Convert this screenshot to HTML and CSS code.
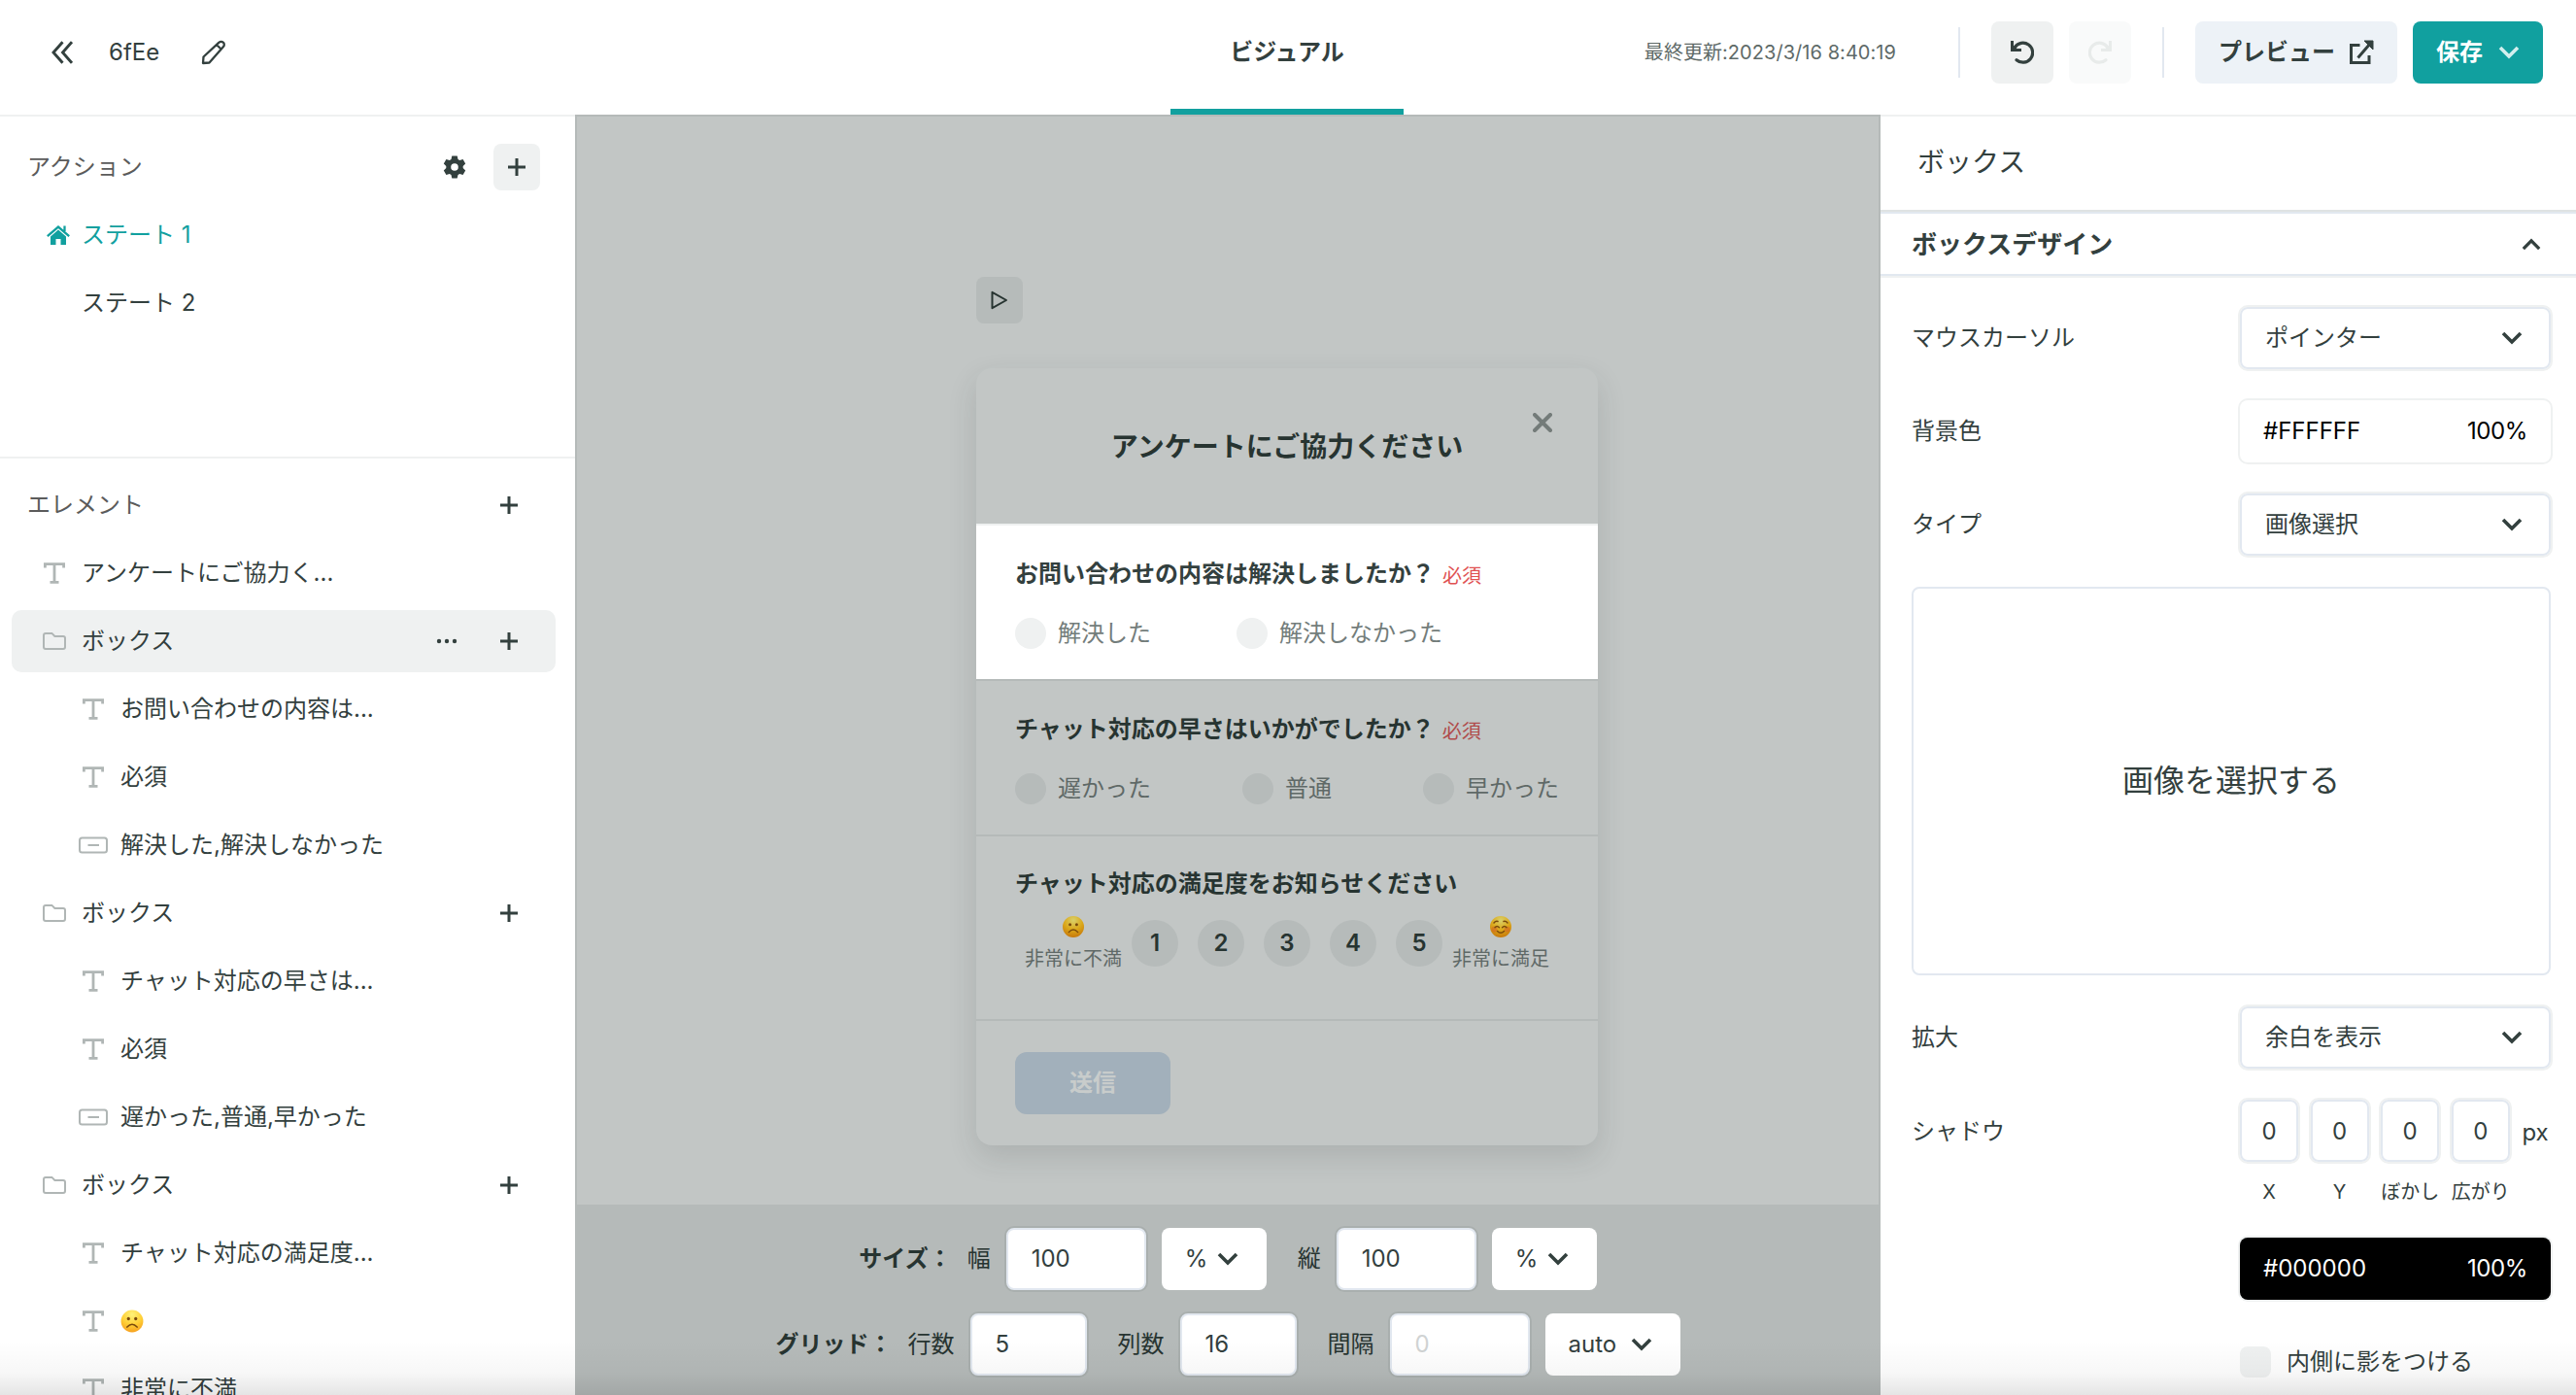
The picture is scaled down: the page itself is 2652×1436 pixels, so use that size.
FILE: index.html
```html
<!DOCTYPE html>
<html lang="ja">
<head>
    <meta charset="UTF-8">
    <meta name="viewport" content="width=device-width, initial-scale=1.0">
    <title>6fEe - ビジュアル</title>
    <link rel="stylesheet" href="styles.css">
</head>
<body>

    <!-- Shared icons -->
    <svg class="sprite" width="0" height="0">
        <symbol id="i-plus" viewBox="0 0 18 18"><path d="M9 0v18M0 9h18" stroke="currentColor" stroke-width="3"/></symbol>
        <symbol id="i-chevron" viewBox="0 0 22 14"><path d="M2 2l9 9 9-9" fill="none" stroke="currentColor" stroke-width="3.6"/></symbol>
        <symbol id="i-text" viewBox="0 0 22 22"><path d="M1.400 5.400V1.600h19.200v3.800M11 1.600v18.800M6.500 20.400h9" fill="none" stroke="currentColor" stroke-width="2.800"/></symbol>
        <symbol id="i-folder" viewBox="0 0 24 20"><path d="M3 1.9h6.4l3 3H21q2 0 2 2V16q0 2-2 2H3q-2 0-2-2V3.900q0-2 2-2z" fill="none" stroke="currentColor" stroke-width="2"/></symbol>
        <symbol id="i-field" viewBox="0 0 30 18"><rect x="1" y="1.500" width="28" height="15" rx="2.500" fill="none" stroke="currentColor" stroke-width="2"/><path d="M9.500 9h11.500" stroke="currentColor" stroke-width="2"/></symbol>
        <symbol id="i-redo" viewBox="0 0 24 24"><path d="M18 19.700a10 10 0 1 1 1.800-12.900" fill="none" stroke="currentColor" stroke-width="3.200" stroke-linecap="round"/><path d="M21 0h3v11H13V8h4.500L21 5z" fill="currentColor"/></symbol>
        <radialGradient id="face" cx=".5" cy=".2" r=".85">
            <stop offset="0" stop-color="#fff27a"/>
            <stop offset=".55" stop-color="#ffcf35"/>
            <stop offset="1" stop-color="#f59a1c"/>
        </radialGradient>
        <radialGradient id="face-dim" cx=".5" cy=".2" r=".85">
            <stop offset="0" stop-color="#d9d06a"/>
            <stop offset=".5" stop-color="#dba91b"/>
            <stop offset="1" stop-color="#c57208"/>
        </radialGradient>
        <symbol id="i-frown" viewBox="0 0 22 22">
            <circle cx="7.600" cy="8.700" r="1.500"/><circle cx="14.400" cy="8.700" r="1.500"/>
            <path d="M6.300 16.600q4.700-5.200 9.400 0" fill="none" stroke="currentColor" stroke-width="1.400" stroke-linecap="round"/>
        </symbol>
        <symbol id="i-smile" viewBox="0 0 22 22">
            <circle cx="4.500" cy="13.500" r="3" fill="#d4572a" opacity=".45"/><circle cx="17.500" cy="13.500" r="3" fill="#d4572a" opacity=".45"/>
            <path d="M4 7q1.800-2.200 4-1.500M18 7q-1.800-2.200-4-1.500M5 11.800q2.200-2.600 4.400 0M12.600 11.800q2.200-2.600 4.400 0M7.500 15.500q3.500 3.600 7 0" fill="none" stroke="currentColor" stroke-width="1.500" stroke-linecap="round"/>
        </symbol>
    </svg>

    <header class="header">
        <div class="header-left">
            <svg class="back" width="22" height="24" viewBox="0 0 22 24"><path d="M11.500 1.200L2 12l9.500 10.800M21 1.200L11.500 12l9.500 10.800" fill="none" stroke="currentColor" stroke-width="2.900"/></svg>
            <span class="name">6fEe</span>
            <svg width="26" height="26" viewBox="0 0 26 26"><path d="M2 24l.5-6.500L18.500 2.700a3 3 0 0 1 4.300 0 3 3 0 0 1 .2 4.300L8.500 23.500zM16 5l5 5" fill="none" stroke="currentColor" stroke-width="2.300" stroke-linejoin="round"/></svg>
        </div>
        <div class="tab">ビジュアル</div>
        <div class="header-right">
            <span class="updated">最終更新:2023/3/16 8:40:19</span>
            <span class="sep"></span>
            <button class="icon-btn undo"><svg class="flip" width="24" height="24"><use href="#i-redo"/></svg></button>
            <button class="icon-btn redo"><svg width="24" height="24"><use href="#i-redo"/></svg></button>
            <span class="sep"></span>
            <button class="btn preview">プレビュー
                <svg width="26" height="26" viewBox="0 0 26 26"><path d="M11.500 5.500H2.500v18h18.500V16M9.500 18.500L22 4" fill="none" stroke="currentColor" stroke-width="3"/><path d="M16 1h9v9z" fill="currentColor" stroke="currentColor"/></svg>
            </button>
            <button class="btn save">保存
                <svg width="22" height="14"><use href="#i-chevron"/></svg>
            </button>
        </div>
    </header>

    <main class="editor">
        <!-- States and element tree -->
        <aside class="sidebar">
            <section class="states">
                <div class="side-head">
                    <h2>アクション</h2>
                    <svg class="gear" width="24" height="24" viewBox="0 0 24 24"><path fill="currentColor" fill-rule="evenodd" d="M9.300 0.500h5.400l.8 3.400 1.700 1 3.400-1 2.600 4.600-2.500 2.400v2.200l2.500 2.400-2.600 4.600-3.400-1-1.700 1-.8 3.400H9.300l-.8-3.400-1.700-1-3.400 1-2.600-4.600 2.500-2.400v-2.200L.8 8.500l2.600-4.600 3.400 1 1.700-1zM12 8.200a3.800 3.800 0 1 0 0 7.600 3.800 3.800 0 0 0 0-7.600z"/></svg>
                    <button class="add-btn"><svg width="18" height="18"><use href="#i-plus"/></svg></button>
                </div>
                <div class="row current">
                    <span class="icon"><svg width="24" height="20" viewBox="0 0 24 20"><path fill="currentColor" d="M4 11.500l8-7 8 7V20h-5.500v-6h-5v6H4z"/><path d="M.8 11.200L12 1.600l11.200 9.600M18.500 .5V6" fill="none" stroke="currentColor" stroke-width="2.300"/></svg></span>
                    <span>ステート 1</span>
                </div>
                <div class="row">
                    <span class="icon"></span>
                    <span>ステート 2</span>
                </div>
            </section>

            <section class="elements">
                <div class="side-head">
                    <h2>エレメント</h2>
                    <svg class="add" width="18" height="18"><use href="#i-plus"/></svg>
                </div>
                <div class="row"><span class="icon"><svg width="22" height="22"><use href="#i-text"/></svg></span><span>アンケートにご協力く...</span></div>
                <div class="row selected">
                    <span class="icon"><svg width="24" height="20"><use href="#i-folder"/></svg></span><span>ボックス</span>
                    <svg class="more" width="22" height="6" viewBox="0 0 22 6"><circle cx="3" cy="3" r="2.200"/><circle cx="11" cy="3" r="2.200"/><circle cx="19" cy="3" r="2.200"/></svg>
                    <svg class="add" width="18" height="18"><use href="#i-plus"/></svg>
                </div>
                <div class="row child"><span class="icon"><svg width="22" height="22"><use href="#i-text"/></svg></span><span>お問い合わせの内容は...</span></div>
                <div class="row child"><span class="icon"><svg width="22" height="22"><use href="#i-text"/></svg></span><span>必須</span></div>
                <div class="row child"><span class="icon"><svg width="30" height="18"><use href="#i-field"/></svg></span><span>解決した,解決しなかった</span></div>
                <div class="row">
                    <span class="icon"><svg width="24" height="20"><use href="#i-folder"/></svg></span><span>ボックス</span>
                    <svg class="add" width="18" height="18"><use href="#i-plus"/></svg>
                </div>
                <div class="row child"><span class="icon"><svg width="22" height="22"><use href="#i-text"/></svg></span><span>チャット対応の早さは...</span></div>
                <div class="row child"><span class="icon"><svg width="22" height="22"><use href="#i-text"/></svg></span><span>必須</span></div>
                <div class="row child"><span class="icon"><svg width="30" height="18"><use href="#i-field"/></svg></span><span>遅かった,普通,早かった</span></div>
                <div class="row">
                    <span class="icon"><svg width="24" height="20"><use href="#i-folder"/></svg></span><span>ボックス</span>
                    <svg class="add" width="18" height="18"><use href="#i-plus"/></svg>
                </div>
                <div class="row child"><span class="icon"><svg width="22" height="22"><use href="#i-text"/></svg></span><span>チャット対応の満足度...</span></div>
                <div class="row child"><span class="icon"><svg width="22" height="22"><use href="#i-text"/></svg></span><svg class="emoji" width="24" height="24" viewBox="0 0 22 22"><circle cx="11" cy="11" r="10.500" fill="url(#face)"/><use href="#i-frown" width="22" height="22"/></svg></div>
                <div class="row child"><span class="icon"><svg width="22" height="22"><use href="#i-text"/></svg></span><span>非常に不満</span></div>
            </section>
        </aside>

        <!-- Canvas with the survey being edited -->
        <section class="canvas">
            <div class="stage">
                <button class="play"><svg width="18" height="20" viewBox="0 0 18 20"><path d="M1.500 1.800v16.400L16 10z" fill="none" stroke="currentColor" stroke-width="2" stroke-linejoin="round"/></svg></button>

                <div class="card">
                    <div class="card-head">
                        <span>アンケートにご協力ください</span>
                        <svg class="close" width="20" height="20" viewBox="0 0 20 20"><path d="M2 2l16 16M18 2L2 18" stroke="currentColor" stroke-width="4" stroke-linecap="round"/></svg>
                    </div>
                    <div class="question active">
                        <h3>お問い合わせの内容は解決しましたか？<em>必須</em></h3>
                        <div class="options two">
                            <label><i></i>解決した</label>
                            <label><i></i>解決しなかった</label>
                        </div>
                    </div>
                    <div class="question">
                        <h3>チャット対応の早さはいかがでしたか？<em>必須</em></h3>
                        <div class="options">
                            <label><i></i>遅かった</label>
                            <label><i></i>普通</label>
                            <label><i></i>早かった</label>
                        </div>
                    </div>
                    <div class="question rating">
                        <h3>チャット対応の満足度をお知らせください</h3>
                        <div class="scale">
                            <div class="face"><svg class="emoji" width="22" height="22"><circle cx="11" cy="11" r="11" fill="url(#face-dim)"/><use href="#i-frown"/></svg>非常に不満</div>
                            <div class="scores">
                                <b>1</b><b>2</b><b>3</b><b>4</b><b>5</b>
                            </div>
                            <div class="face"><svg class="emoji" width="22" height="22"><circle cx="11" cy="11" r="11" fill="url(#face-dim)"/><use href="#i-smile"/></svg>非常に満足</div>
                        </div>
                    </div>
                    <div class="card-foot">
                        <button class="submit">送信</button>
                    </div>
                </div>
            </div>

            <div class="toolbar">
                <div class="tool-row">
                    <strong>サイズ：</strong>
                    <span>幅</span>
                    <div class="num">100</div>
                    <div class="unit">%<svg width="22" height="14"><use href="#i-chevron"/></svg></div>
                    <span class="next">縦</span>
                    <div class="num">100</div>
                    <div class="unit">%<svg width="22" height="14"><use href="#i-chevron"/></svg></div>
                </div>
                <div class="tool-row">
                    <strong>グリッド：</strong>
                    <span>行数</span>
                    <div class="num small">5</div>
                    <span class="next">列数</span>
                    <div class="num small">16</div>
                    <span class="next">間隔</span>
                    <div class="num empty">0</div>
                    <div class="unit wide">auto<svg width="22" height="14"><use href="#i-chevron"/></svg></div>
                </div>
            </div>
        </section>

        <!-- Properties of the selected box -->
        <aside class="props">
            <div class="props-title">ボックス</div>
            <div class="props-section">
                <span>ボックスデザイン</span>
                <svg class="up" width="20" height="13"><use href="#i-chevron"/></svg>
            </div>
            <div class="props-body">
                <div class="prop">
                    <span>マウスカーソル</span>
                    <div class="select">ポインター<svg width="22" height="14"><use href="#i-chevron"/></svg></div>
                </div>
                <div class="prop">
                    <span>背景色</span>
                    <div class="color white"><span>#FFFFFF</span><span>100%</span></div>
                </div>
                <div class="prop">
                    <span>タイプ</span>
                    <div class="select">画像選択<svg width="22" height="14"><use href="#i-chevron"/></svg></div>
                </div>
                <div class="image-pick">画像を選択する</div>
                <div class="prop">
                    <span>拡大</span>
                    <div class="select">余白を表示<svg width="22" height="14"><use href="#i-chevron"/></svg></div>
                </div>
                <div class="prop shadow-prop">
                    <span>シャドウ</span>
                    <div class="shadow-inputs">
                        <div><p>0</p>X</div>
                        <div><p>0</p>Y</div>
                        <div><p>0</p>ぼかし</div>
                        <div><p>0</p>広がり</div>
                        <span>px</span>
                    </div>
                </div>
                <div class="color black"><span>#000000</span><span>100%</span></div>
                <label class="inset"><i></i>内側に影をつける</label>
            </div>
        </aside>
    </main>

    <div class="bottom-fade"></div>

</body>
</html>
```
FILE: styles.css
```css
* {
    box-sizing: border-box;
}

body {
    font-family: Inter, "Noto Sans CJK JP", sans-serif;
    font-size: 24px;
    line-height: 32px;
    color: #33403e;
    background-color: #fff;
    margin: 0;
    height: 1436px;
    overflow: hidden;
    display: flex;
    flex-direction: column;
}

h2, h3, p {
    margin: 0;
    font-size: inherit;
}

svg {
    flex: none;
    display: block;
}

.sprite {
    position: absolute;
}

button {
    font: inherit;
    color: inherit;
    border: none;
    padding: 0;
    border-radius: 8px;
    display: flex;
    align-items: center;
    justify-content: center;
}

i, em {
    font-style: normal;
}

/* Header */
.header {
    flex: none;
    height: 118px;
    display: grid;
    grid-template-columns: 1205px 240px 1fr;
}

.header-left, .header-right {
    display: flex;
    align-items: center;
    height: 108px;
}

.header-left {
    padding-left: 53px;
}

.name {
    width: 95px;
    margin-left: 37px;
}

.tab {
    height: 118px;
    padding-top: 38px;
    border-bottom: 6px solid #11a09f;
    text-align: center;
    font-weight: 700;
}

.header-right {
    justify-content: flex-end;
    padding-right: 34px;
}

.updated {
    font-size: 20px;
    letter-spacing: 0.05px;
    color: #5e6a68;
    margin-right: 64px;
}

.sep {
    width: 2px;
    height: 52px;
    background-color: #e2e8f0;
}

.icon-btn {
    width: 64px;
    height: 64px;
    background-color: #eff1f1;
}

.undo {
    margin-left: 32px;
    margin-right: 16px;
}

.redo {
    margin-right: 32px;
    color: #e8ebea;
    background-color: #f9fafa;
}

.flip {
    transform: scaleX(-1);
}

.btn {
    height: 64px;
    font-weight: 700;
}

.preview {
    width: 208px;
    margin-left: 32px;
    margin-right: 16px;
    gap: 14px;
    background-color: #edf2f7;
}

.save {
    width: 134px;
    gap: 16px;
    color: #fff;
    background-color: #11a09f;
}

.save svg {
    color: #d3efee;
}

/* Three columns */
.editor {
    display: grid;
    grid-template-columns: 592px 1344px 716px;
    height: 1318px;
}

/* Left sidebar */
.sidebar {
    border-top: 2px solid #eff1f1;
    overflow: hidden;
}

.states {
    height: 352px;
    padding-top: 17px;
    border-bottom: 2px solid #eff1f1;
}

.elements {
    padding-top: 13px;
}

.side-head {
    display: flex;
    align-items: center;
    height: 70px;
    padding-left: 28px;
    padding-right: 36px;
}

.side-head h2 {
    flex: 1;
    font-weight: 400;
    color: #5b5b5b;
}

.gear {
    margin-right: 28px;
}

.add-btn {
    width: 48px;
    height: 48px;
    background-color: #eff1f1;
}

.side-head .add {
    margin-right: 23px;
}

.row {
    display: flex;
    align-items: center;
    height: 64px;
    margin: 3px 20px 6px 12px;
    padding-left: 28px;
    padding-right: 39px;
    border-radius: 10px;
}

.row.child {
    padding-left: 68px;
}

.row .icon {
    width: 32px;
    margin-right: 12px;
    display: flex;
    justify-content: center;
    color: #b0b6b5;
}

.row .add {
    margin-left: auto;
}

.row .more {
    margin-left: auto;
    fill: #33403e;
}

.row .more + .add {
    margin-left: 44px;
}

.row.current, .row.current .icon {
    color: #11a09f;
}

.row.current .icon {
    padding-left: 8px;
}

.selected {
    background-color: #eff1f1;
}

.emoji {
    color: #7a4a0c;
    fill: #7a4a0c;
}

/* Canvas */
.canvas {
    display: flex;
    flex-direction: column;
    background-color: #c2c6c5;
    border: 2px solid #b5bab9;
    border-bottom: none;
    color: #273431;
    overflow: hidden;
}

.stage {
    flex: 1;
    padding: 165px 0 0 411px;
}

.play {
    width: 48px;
    height: 48px;
    background-color: #b6bbba;
}

.card {
    width: 640px;
    height: 800px;
    margin-top: 46px;
    border-radius: 16px;
    background-color: #c2c6c5;
    box-shadow: 0 12px 30px rgba(39, 52, 49, 0.14);
}

.card-head {
    height: 160px;
    display: flex;
    align-items: center;
    justify-content: center;
    position: relative;
    padding-top: 2px;
    font-size: 28px;
    font-weight: 700;
}

.close {
    position: absolute;
    top: 46px;
    right: 47px;
    color: #737b79;
}

.question {
    height: 160px;
    padding: 34px 40px 0;
    border-top: 2px solid #b5bab9;
}

.question.active {
    color: #33403e;
    background-color: #fff;
    border-color: #eff1f1;
}

.question h3 {
    display: flex;
    height: 32px;
    font-weight: 700;
    white-space: nowrap;
}

.question em {
    margin-left: 8px;
    padding-top: 2px;
    font-size: 20px;
    font-weight: 400;
    color: #b04c4b;
}

.active em {
    color: #e05252;
}

.options {
    display: flex;
    justify-content: space-between;
    margin-top: 29px;
    color: #5f6967;
}

.options.two {
    justify-content: flex-start;
    gap: 88px;
}

.options label {
    display: flex;
    gap: 12px;
}

.options i {
    width: 32px;
    height: 32px;
    border-radius: 50%;
    background-color: #b6bbba;
}

.active .options {
    color: #737d7b;
}

.active i {
    background-color: #eff1f1;
}

.rating {
    height: 190px;
    padding-top: 33px;
}

.scale {
    display: flex;
    align-items: flex-start;
    justify-content: center;
    gap: 10px;
    margin-top: 17px;
}

.face {
    display: flex;
    flex-direction: column;
    align-items: center;
    gap: 6px;
    font-size: 20px;
    color: #5f6967;
}

.scores {
    display: flex;
    gap: 20px;
    padding-top: 4px;
}

.scores b {
    width: 48px;
    height: 48px;
    border-radius: 50%;
    background-color: #b6bbba;
    line-height: 48px;
    text-align: center;
    font-weight: 600;
}

.card-foot {
    padding: 32px 40px;
    border-top: 2px solid #b5bab9;
}

.submit {
    width: 160px;
    height: 64px;
    border-radius: 12px;
    font-weight: 700;
    color: #c8cccb;
    background-color: #a2b0bb;
}

/* Size and grid controls */
.toolbar {
    height: 196px;
    padding-top: 24px;
    background-color: #b5bab9;
}

.tool-row {
    display: flex;
    align-items: center;
    justify-content: center;
    gap: 16px;
    margin-bottom: 24px;
}

.next {
    margin-left: 16px;
}

.num, .unit {
    height: 64px;
    border-radius: 8px;
    background-color: #fff;
    color: #33403e;
    display: flex;
    align-items: center;
}

.num {
    width: 144px;
    padding-left: 24px;
    border: 2px solid #e2e8f0;
    box-shadow: 0 0 0 2px #a9afae;
}

.num.small {
    width: 120px;
}

.num.empty {
    color: #d0d3d3;
}

.unit {
    width: 108px;
    padding: 0 29px 0 24px;
    justify-content: space-between;
}

.unit.wide {
    width: 139px;
}

/* Right panel */
.props {
    border-top: 2px solid #eff1f1;
}

.props-title {
    height: 98px;
    padding: 31px 0 0 38px;
    border-bottom: 2px solid #dfe3e3;
    font-size: 28px;
}

.props-section {
    height: 66px;
    display: flex;
    align-items: center;
    justify-content: space-between;
    padding: 1px 36px 0 32px;
    border-top: 2px solid #e2e8f0;
    border-bottom: 2px solid #e2e8f0;
    box-shadow: 0 2px 0 #eff1f1;
    font-size: 26px;
    font-weight: 700;
}

.up {
    transform: rotate(180deg);
}

.props-body {
    padding: 32px 26px 0 32px;
}

.prop {
    display: flex;
    align-items: center;
    justify-content: space-between;
    height: 64px;
    margin-bottom: 32px;
}

.select, .shadow-inputs p, .image-pick {
    border: 2px solid #e2e8f0;
    border-radius: 8px;
}

.select, .shadow-inputs p {
    box-shadow: 0 0 0 2px #eff1f1;
}

.select {
    width: 320px;
    height: 64px;
    padding: 0 27px 0 24px;
    display: flex;
    align-items: center;
    justify-content: space-between;
}

.image-pick {
    height: 400px;
    margin-bottom: 32px;
    display: flex;
    align-items: center;
    justify-content: center;
    font-size: 32px;
}

.color {
    width: 320px;
    height: 64px;
    padding: 0 24px;
    border-radius: 8px;
    box-shadow: 0 0 0 2px #eff1f1;
    display: flex;
    align-items: center;
    justify-content: space-between;
}

.color span:last-child {
    letter-spacing: -0.4px;
}

.white {
    color: #000;
}

.black {
    margin-left: auto;
    color: #fff;
    background-color: #000;
}

.shadow-prop {
    align-items: flex-start;
    height: 110px;
}

.shadow-prop > span {
    padding-top: 17px;
}

.shadow-inputs {
    display: flex;
    width: 320px;
    gap: 12.600px;
}

.shadow-inputs div {
    width: 60px;
    font-size: 20px;
    text-align: center;
    white-space: nowrap;
}

.shadow-inputs p {
    height: 64px;
    margin-bottom: 15px;
    line-height: 61px;
    font-size: 24px;
}

.shadow-inputs span {
    padding-top: 18px;
}

.inset {
    display: flex;
    gap: 16px;
    width: 320px;
    margin: 48px 0 0 auto;
}

.inset i {
    width: 32px;
    height: 32px;
    border-radius: 8px;
    background-color: #eff1f1;
}

/* Soft shade along the window's lower edge */
.bottom-fade {
    position: absolute;
    left: 0;
    right: 0;
    bottom: 0;
    height: 56px;
    background: linear-gradient(rgba(0, 0, 0, 0), rgba(0, 0, 0, 0.03) 60%, rgba(0, 0, 0, 0.1));
    pointer-events: none;
}
```
